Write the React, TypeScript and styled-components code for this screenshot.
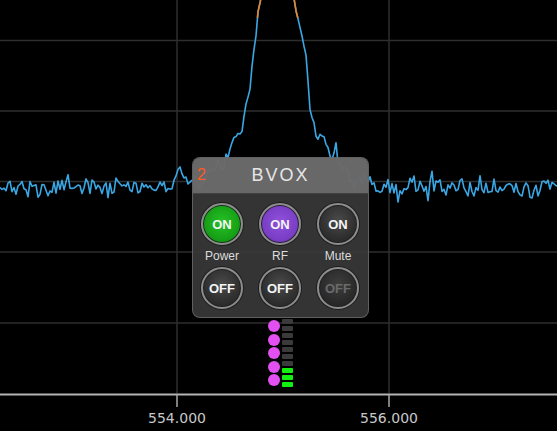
import React, { useMemo } from "react";
import styled, { createGlobalStyle, css } from "styled-components";

const GlobalStyle = createGlobalStyle`
  html, body {
    margin: 0;
    padding: 0;
    background: #000;
  }
  body {
    font-family: "Liberation Sans", Arial, sans-serif;
  }
`;

const Screen = styled.div`
  position: relative;
  width: 557px;
  height: 431px;
  background: #000;
  overflow: hidden;
`;

const Plot = styled.svg`
  display: block;
`;

const Overlay = styled.div`
  position: absolute;
  left: 192px;
  top: 157px;
  display: flex;
  flex-direction: column;
  align-items: center;
`;

const Panel = styled.div`
  position: relative;
  box-sizing: border-box;
  width: 177px;
  height: 161px;
  border-radius: 8px;
  overflow: hidden;
  background: rgba(58, 58, 58, 0.9);
  border: 1px solid rgba(150, 150, 150, 0.45);
`;

const Header = styled.div`
  height: 35px;
  display: flex;
  align-items: center;
  justify-content: center;
  background: rgba(118, 118, 118, 0.8);
  border-bottom: 1px solid rgba(30, 30, 30, 0.5);
  color: #e6e6e6;
  font-size: 18px;
  letter-spacing: 2px;
`;

const Badge = styled.span`
  position: absolute;
  left: 4px;
  top: 8px;
  color: #ff5a1f;
  font-size: 16px;
  line-height: 18px;
`;

const Controls = styled.div`
  display: grid;
  grid-template-columns: repeat(3, 58px);
  grid-template-rows: 42px 22px 42px;
  justify-items: center;
  align-items: center;
  padding-top: 9px;
`;

type Tone = "green" | "purple" | "dark" | "dim";

const fills: Record<Tone, string> = {
  green: "radial-gradient(circle at 50% 45%, #27c227 0%, #16a016 60%, #0d7f0d 100%)",
  purple: "radial-gradient(circle at 50% 45%, #9150dc 0%, #7a3fc6 60%, #5f2ca4 100%)",
  dark: "radial-gradient(circle at 50% 40%, #4a4a4a 0%, #2f2f2f 60%, #222 100%)",
  dim: "radial-gradient(circle at 50% 40%, #3e3e3e 0%, #2a2a2a 60%, #202020 100%)",
};

const Toggle = styled.div<{ $tone: Tone }>`
  box-sizing: border-box;
  width: 42px;
  height: 42px;
  border-radius: 50%;
  border: 2px solid #8c8c8c;
  box-shadow: 0 0 0 1px #1e1e1e, inset 0 0 0 1px #222;
  background: ${(p) => fills[p.$tone]};
  display: flex;
  align-items: center;
  justify-content: center;
  font-size: 13px;
  font-weight: 700;
  color: #f4f4f4;
  ${(p) =>
    p.$tone === "dim" &&
    css`
      color: #6a6a6a;
    `}
`;

const Label = styled.span`
  font-size: 12px;
  color: #dcdcdc;
`;

const Meter = styled.div`
  display: flex;
  gap: 2px;
  margin-top: 1px;
`;

const Dots = styled.div`
  display: flex;
  flex-direction: column;
  gap: 1.5px;
  padding-top: 1px;
`;

const Dot = styled.div`
  width: 12px;
  height: 12px;
  border-radius: 50%;
  background: #e350f2;
`;

const Bars = styled.div`
  display: flex;
  flex-direction: column;
  gap: 2px;
`;

const Bar = styled.div<{ $lit: boolean }>`
  width: 11px;
  height: 5px;
  border-radius: 1px;
  background: ${(p) => (p.$lit ? "#12f012" : "#3a3a3a")};
`;

function rng(seed: number) {
  let a = seed;
  return () => {
    a |= 0;
    a = (a + 0x6d2b79f5) | 0;
    let t = Math.imul(a ^ (a >>> 15), 1 | a);
    t = (t + Math.imul(t ^ (t >>> 7), 61 | t)) ^ t;
    return ((t ^ (t >>> 14)) >>> 0) / 4294967296;
  };
}

const envelope: [number, number][] = [
  [0, 187], [150, 187], [190, 183], [205, 178], [218, 172], [225, 163],
  [228, 156], [233, 141], [237, 134], [242, 131], [245, 110], [247, 98],
  [250, 90], [253, 52], [255, 47], [258, 12], [262, -6], [266, -40],
  [290, -40], [293, -4], [299, 22], [303, 42], [306, 56], [310, 108],
  [315, 128], [317, 143], [320, 133], [325, 139], [330, 156], [338, 168],
  [352, 178], [372, 186], [557, 189],
];

function env(x: number) {
  for (let i = 1; i < envelope.length; i++) {
    const [x1, y1] = envelope[i];
    const [x0, y0] = envelope[i - 1];
    if (x <= x1) return y0 + ((y1 - y0) * (x - x0)) / (x1 - x0);
  }
  return 189;
}

// noisy spectrum trace with a carrier peak in the middle
function buildTrace() {
  const r = rng(11);
  const pts: string[] = [];
  let drift = 0;
  for (let x = 0; x <= 558; x += 2) {
    const steep = x > 226 && x < 332;
    drift = drift * 0.8 + (r() - 0.5) * 5;
    const amp = steep ? 4 : 15;
    let y = env(x) + (r() - 0.5) * amp + (steep ? 0 : drift);
    if (!steep && r() < 0.06) y -= 6 + r() * 12;
    if (!steep && r() < 0.05) y += 4 + r() * 6;
    pts.push(`${x.toFixed(1)},${y.toFixed(1)}`);
  }
  return pts.join(" ");
}

const gridY = [40.5, 111, 181.5, 252, 323];
const gridX = [177, 389];

const App = () => {
  const trace = useMemo(buildTrace, []);

  return (
    <>
      <GlobalStyle />
      <Screen>
        <Plot width={557} height={431} viewBox="0 0 557 431">
          <defs>
            <clipPath id="hot">
              <rect x={0} y={-50} width={557} height={68} />
            </clipPath>
          </defs>
          {gridY.map((y) => (
            <line key={y} x1={0} x2={557} y1={y} y2={y} stroke="#2e2e2e" strokeWidth={1.5} />
          ))}
          {gridX.map((x) => (
            <line key={x} x1={x} x2={x} y1={0} y2={394} stroke="#2e2e2e" strokeWidth={1.5} />
          ))}
          <polyline points={trace} fill="none" stroke="#3aa7e4" strokeWidth={1.6} strokeLinejoin="round" />
          <polyline
            points={trace}
            fill="none"
            stroke="#e8842a"
            strokeWidth={1.6}
            strokeLinejoin="round"
            clipPath="url(#hot)"
          />
          <line x1={0} x2={557} y1={394.5} y2={394.5} stroke="#b4b4b4" strokeWidth={2} />
          {gridX.map((x) => (
            <line key={`t${x}`} x1={x} x2={x} y1={394} y2={407} stroke="#a8a8a8" strokeWidth={1.5} />
          ))}
          {gridX.map((x, i) => (
            <text
              key={`l${x}`}
              x={x}
              y={423}
              textAnchor="middle"
              fill="#c8c8c8"
              fontSize={14}
              fontFamily="'DejaVu Sans', sans-serif"
            >
              {i === 0 ? "554.000" : "556.000"}
            </text>
          ))}
        </Plot>

        <Overlay>
          <Panel>
            <Header>BVOX</Header>
            <Badge>2</Badge>
            <Controls>
              <Toggle $tone="green">ON</Toggle>
              <Toggle $tone="purple">ON</Toggle>
              <Toggle $tone="dark">ON</Toggle>
              <Label>Power</Label>
              <Label>RF</Label>
              <Label>Mute</Label>
              <Toggle $tone="dark">OFF</Toggle>
              <Toggle $tone="dark">OFF</Toggle>
              <Toggle $tone="dim">OFF</Toggle>
            </Controls>
          </Panel>
          <Meter>
            <Dots>
              {[0, 1, 2, 3, 4].map((i) => (
                <Dot key={i} />
              ))}
            </Dots>
            <Bars>
              {Array.from({ length: 10 }, (_, i) => (
                <Bar key={i} $lit={i >= 7} />
              ))}
            </Bars>
          </Meter>
        </Overlay>
      </Screen>
    </>
  );
};

export default App;
